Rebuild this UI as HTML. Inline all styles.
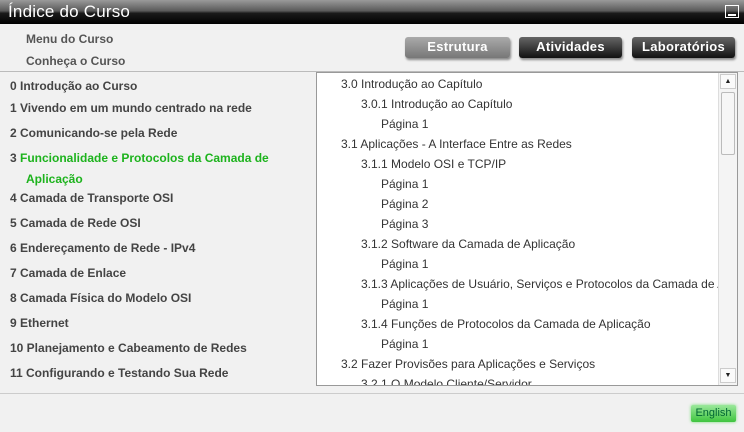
<!DOCTYPE html>
<html><head><meta charset="utf-8"><style>
*{margin:0;padding:0;box-sizing:border-box}
body{width:744px;height:432px;overflow:hidden;background:#f1f1f1;font-family:"Liberation Sans",sans-serif;position:relative}
.title{position:absolute;left:0;top:0;width:744px;height:24px;background:linear-gradient(#9a9a9a,#5a5a5a 45%,#1a1a1a 55%,#000);color:#fff;font-size:17px;padding:2px 0 0 8px;letter-spacing:.2px}
.min{position:absolute;right:5px;top:5px;width:14px;height:13px;border:1px solid #fff;}
.min:after{content:"";position:absolute;left:2px;right:2px;bottom:1px;height:2px;background:#fff}
.top a{position:absolute;left:26px;font-size:12px;font-weight:bold;color:#555}
.btn{position:absolute;top:37px;height:21px;border-radius:3px;color:#fff;font-weight:bold;font-size:13px;text-align:center;line-height:20px;box-shadow:1px 2px 2px #888;letter-spacing:.3px}
.hr{position:absolute;left:0;width:744px;height:1px;background:#bbb}
.left div{position:absolute;left:10px;font-size:12px;font-weight:bold;color:#444;white-space:nowrap}
.left .g{color:#1db31d}
.panel{position:absolute;left:316px;top:72px;width:422px;height:314px;background:#fff;border:1px solid #999;overflow:hidden}
.panel div{position:absolute;font-size:12px;color:#333;white-space:nowrap}
.sb{position:absolute;left:401px;top:0;width:19px;height:312px;background:#f4f4f4;border-left:1px solid #ddd}
.eng{position:absolute;left:691px;top:405px;width:45px;height:17px;background:linear-gradient(#9be89b,#3fc43f);border-radius:2px;font-size:11px;color:#063;text-align:center;line-height:17px;box-shadow:0 0 3px #7d7}
</style></head><body>
<div class="title">Índice do Curso<div class="min"></div></div>
<div class="top"><a style="top:32px">Menu do Curso</a><a style="top:54px">Conheça o Curso</a></div>
<div class="btn" style="left:405px;width:105px;background:linear-gradient(#aaa,#777)">Estrutura</div>
<div class="btn" style="left:519px;width:103px;background:linear-gradient(#666,#111)">Atividades</div>
<div class="btn" style="left:632px;width:103px;background:linear-gradient(#666,#111)">Laboratórios</div>
<div class="hr" style="top:71px"></div>
<div class="left">
<div style="top:79px">0 Introdução ao Curso</div>
<div style="top:101px">1 Vivendo em um mundo centrado na rede</div>
<div style="top:126px">2 Comunicando-se pela Rede</div>
<div style="top:151px">3 <span class="g">Funcionalidade e Protocolos da Camada de</span></div>
<div class="g" style="top:172px;left:26px">Aplicação</div>
<div style="top:191px">4 Camada de Transporte OSI</div>
<div style="top:216px">5 Camada de Rede OSI</div>
<div style="top:241px">6 Endereçamento de Rede - IPv4</div>
<div style="top:266px">7 Camada de Enlace</div>
<div style="top:291px">8 Camada Física do Modelo OSI</div>
<div style="top:316px">9 Ethernet</div>
<div style="top:341px">10 Planejamento e Cabeamento de Redes</div>
<div style="top:366px">11 Configurando e Testando Sua Rede</div>
</div>
<div class="panel">
<div style="left:24px;top:4px">3.0 Introdução ao Capítulo</div>
<div style="left:44px;top:24px">3.0.1 Introdução ao Capítulo</div>
<div style="left:64px;top:44px">Página 1</div>
<div style="left:24px;top:64px">3.1 Aplicações - A Interface Entre as Redes</div>
<div style="left:44px;top:84px">3.1.1 Modelo OSI e TCP/IP</div>
<div style="left:64px;top:104px">Página 1</div>
<div style="left:64px;top:124px">Página 2</div>
<div style="left:64px;top:144px">Página 3</div>
<div style="left:44px;top:164px">3.1.2 Software da Camada de Aplicação</div>
<div style="left:64px;top:184px">Página 1</div>
<div style="left:44px;top:204px">3.1.3 Aplicações de Usuário, Serviços e Protocolos da Camada de Aplicação</div>
<div style="left:64px;top:224px">Página 1</div>
<div style="left:44px;top:244px">3.1.4 Funções de Protocolos da Camada de Aplicação</div>
<div style="left:64px;top:264px">Página 1</div>
<div style="left:24px;top:284px">3.2 Fazer Provisões para Aplicações e Serviços</div>
<div style="left:44px;top:304px">3.2.1 O Modelo Cliente/Servidor</div>
<div class="sb">
<div style="left:1px;top:1px;width:16px;height:15px;border:1px solid #ccc;background:#fafafa;font-size:7px;text-align:center;line-height:13px;color:#222">▲</div>
<div style="left:2px;top:19px;width:14px;height:63px;border:1px solid #bbb;border-radius:2px;background:#f6f6f6"></div>
<div style="left:1px;top:295px;width:16px;height:15px;border:1px solid #ccc;background:#fafafa;font-size:7px;text-align:center;line-height:13px;color:#222">▼</div>
</div>
</div>
<div class="hr" style="top:393px;background:#ccc"></div>
<div class="eng">English</div>
</body></html>
